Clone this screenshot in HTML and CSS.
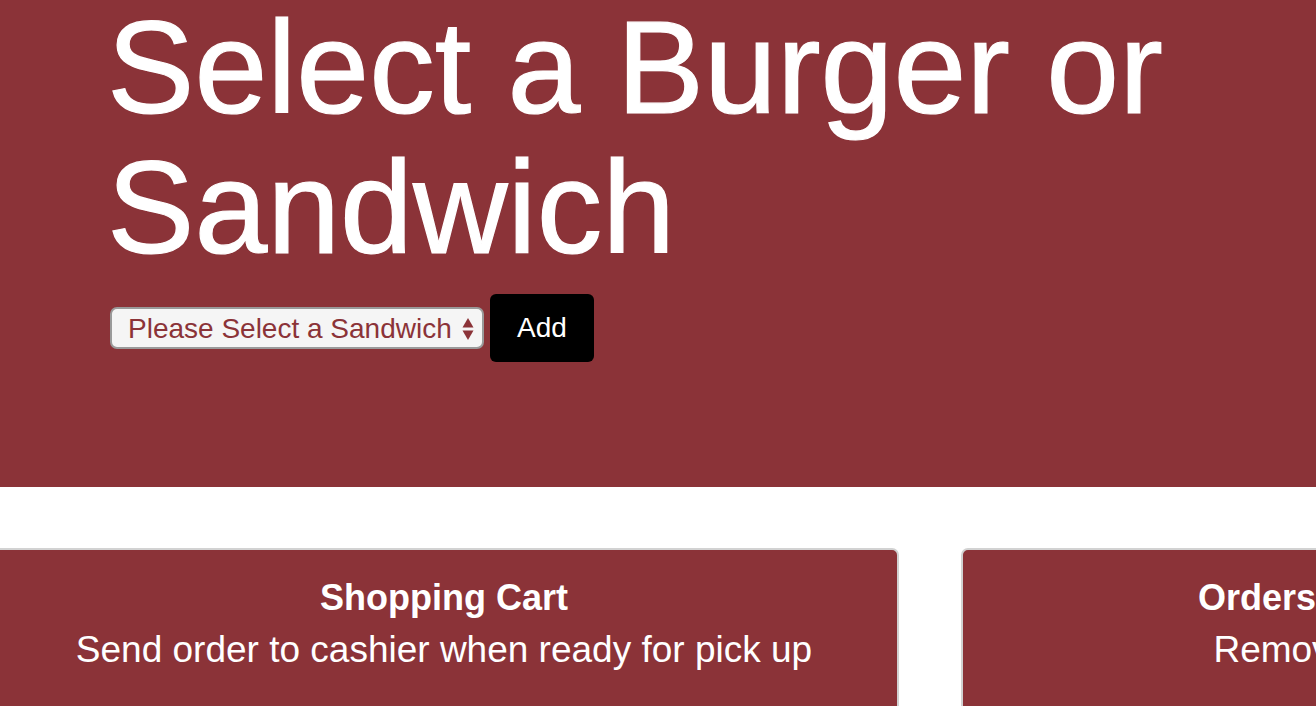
FILE: index.html
```html
<!DOCTYPE html>
<html lang="en">
<head>
<meta charset="utf-8">
<title>Select a Burger or Sandwich</title>
<link rel="stylesheet" href="styles.css">
</head>
<body>
  <header class="hero">
    <div class="hero-inner">
      <h1 class="hero-title">Select a Burger or Sandwich</h1>
      <form class="order-form">
        <div class="select-wrap">
          <select class="sandwich-select">
            <option>Please Select a Sandwich</option>
            <option>Cheeseburger</option>
            <option>Club Sandwich</option>
          </select>
          <svg class="select-arrows" width="12" height="24" viewBox="0 0 12 24" aria-hidden="true">
            <path d="M6 1 L11.5 10.5 L0.5 10.5 Z" fill="#8b3338"/>
            <path d="M0.5 13.5 L11.5 13.5 L6 23 Z" fill="#8b3338"/>
          </svg>
        </div>
        <button type="button" class="add-btn">Add</button>
      </form>
    </div>
  </header>
  <main class="panels">
    <section class="panel">
      <h2 class="panel-title">Shopping Cart</h2>
      <p class="panel-sub">Send order to cashier when ready for pick up</p>
    </section>
    <section class="panel">
      <h2 class="panel-title">Orders Ready for Pick Up</h2>
      <p class="panel-sub">Remove when picked up</p>
    </section>
  </main>
</body>
</html>
```

FILE: styles.css
```css
html, body {
  margin: 0;
  padding: 0;
}
body {
  font-family: "Liberation Sans", Arial, Helvetica, sans-serif;
  background: #ffffff;
  color: #ffffff;
  overflow: hidden;
  width: 1316px;
  height: 706px;
}
.hero {
  background: #8b3338;
  height: 487px;
  box-sizing: border-box;
  display: flow-root;
}
.hero-inner {
  padding-left: 110px;
}
.hero-title {
  margin: -2px 0 0 -3px;
  font-size: 131px;
  line-height: 140px;
  font-weight: normal;
  -webkit-text-stroke: 1.2px #ffffff;
}
.order-form {
  display: flex;
  align-items: center;
  gap: 6px;
  margin-top: 16px;
}
.select-wrap {
  position: relative;
  width: 374px;
  height: 42px;
}
.sandwich-select {
  appearance: none;
  -webkit-appearance: none;
  width: 100%;
  height: 100%;
  box-sizing: border-box;
  border: 2px solid #9a9a9a;
  border-radius: 7px;
  background: #f5f5f5;
  color: #8b3338;
  font-family: "Liberation Sans", Arial, Helvetica, sans-serif;
  font-size: 28px;
  padding: 0 0 0 16px;
  margin: 0;
}
.select-arrows {
  position: absolute;
  right: 10px;
  top: 10px;
  pointer-events: none;
}
.add-btn {
  width: 104px;
  height: 68px;
  background: #000000;
  color: #ffffff;
  border: none;
  border-radius: 6px;
  font-family: "Liberation Sans", Arial, Helvetica, sans-serif;
  font-size: 28px;
  padding: 0;
  margin: 0;
}
.panels {
  display: flex;
  gap: 62px;
  margin: 61px 0 0 -11px;
}
.panel {
  flex: 0 0 910px;
  box-sizing: border-box;
  height: 240px;
  background: #8b3338;
  border: 2px solid #d2d2d2;
  border-radius: 7px;
  padding-top: 22px;
  text-align: center;
}
.panel-title {
  margin: 0;
  font-size: 36px;
  line-height: 52px;
  font-weight: bold;
}
.panel-sub {
  margin: 0;
  font-size: 37px;
  line-height: 52px;
  font-weight: normal;
}
```
